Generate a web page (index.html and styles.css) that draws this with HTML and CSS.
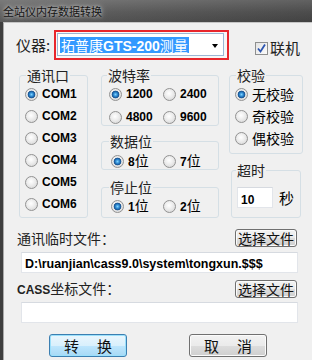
FILE: index.html
```html
<!DOCTYPE html>
<html lang="zh">
<head>
    <meta charset="UTF-8">
    <title>全站仪内存数据转换</title>
    <link rel="stylesheet" href="styles.css">
</head>
<body>
<div class="window">
    <div class="titlebar">全站仪内存数据转换</div>
    <div class="frame">
        <div class="client">
            <div class="toprow">
                <span class="lbl-dev">仪器:</span>
                <div class="mark">
                    <div class="combo">
                        <span class="sel">拓普康<b>GTS-200</b>测量</span>
                        <span class="arrow"></span>
                    </div>
                </div>
                <label class="chk">
                    <span class="box">
                        <svg width="11" height="11" viewBox="0 0 11 11"><path d="M2 5.5 L4.5 8.5 L9 1.5" fill="none" stroke="#2c55b0" stroke-width="1.8"/></svg>
                    </span>
                    <span>联机</span>
                </label>
            </div>

            <div class="groups">
                <fieldset class="grp g-port">
                    <legend>通讯口</legend>
                    <div class="opts">
                        <div class="opt"><span class="radio on"></span><b>COM1</b></div>
                        <div class="opt"><span class="radio"></span><b>COM2</b></div>
                        <div class="opt"><span class="radio"></span><b>COM3</b></div>
                        <div class="opt"><span class="radio"></span><b>COM4</b></div>
                        <div class="opt"><span class="radio"></span><b>COM5</b></div>
                        <div class="opt"><span class="radio"></span><b>COM6</b></div>
                    </div>
                </fieldset>

                <div class="col col-mid">
                    <fieldset class="grp g-baud">
                        <legend>波特率</legend>
                        <div class="grid">
                            <div class="opt"><span class="radio on"></span><b>1200</b></div>
                            <div class="opt"><span class="radio"></span><b>2400</b></div>
                            <div class="opt"><span class="radio"></span><b>4800</b></div>
                            <div class="opt"><span class="radio"></span><b>9600</b></div>
                        </div>
                    </fieldset>
                    <fieldset class="grp g-data">
                        <legend>数据位</legend>
                        <div class="grid">
                            <div class="opt"><span class="radio on"></span><span><b>8</b>位</span></div>
                            <div class="opt"><span class="radio"></span><span><b>7</b>位</span></div>
                        </div>
                    </fieldset>
                    <fieldset class="grp g-stop">
                        <legend>停止位</legend>
                        <div class="grid">
                            <div class="opt"><span class="radio on"></span><span><b>1</b>位</span></div>
                            <div class="opt"><span class="radio"></span><span><b>2</b>位</span></div>
                        </div>
                    </fieldset>
                </div>

                <div class="col col-right">
                    <fieldset class="grp g-check">
                        <legend>校验</legend>
                        <div class="opts">
                            <div class="opt"><span class="radio on"></span><span>无校验</span></div>
                            <div class="opt"><span class="radio"></span><span>奇校验</span></div>
                            <div class="opt"><span class="radio"></span><span>偶校验</span></div>
                        </div>
                    </fieldset>
                    <fieldset class="grp g-time">
                        <legend>超时</legend>
                        <div class="timeout">
                            <span class="field small"><b>10</b></span>
                            <span>秒</span>
                        </div>
                    </fieldset>
                </div>
            </div>

            <div class="files">
                <div class="filerow">
                    <span>通讯临时文件：</span>
                    <span class="btn pick">选择文件</span>
                </div>
                <div class="field path"><b>D:\ruanjian\cass9.0\system\tongxun.$$$</b></div>
                <div class="filerow second">
                    <span><b class="cass">CASS</b>坐标文件：</span>
                    <span class="btn pick">选择文件</span>
                </div>
                <div class="field path"></div>
            </div>

            <div class="actions">
                <span class="btn big default"><span>转</span><span>换</span></span>
                <span class="btn big"><span>取</span><span>消</span></span>
            </div>
        </div>
    </div>
</div>
</body>
</html>
```

FILE: styles.css
```css
body{
    margin: 0;
    background: #f0f0f0;
    font-family: "Noto Sans CJK SC", "Liberation Sans", sans-serif;
    font-size: 14px;
    color: #000;
}
b{
    font-family: "Liberation Sans", sans-serif;
    font-weight: bold;
}
.window{
    width: 312px;
    height: 360px;
    display: flex;
    flex-direction: column;
    overflow: hidden;
}
.titlebar{
    height: 22px;
    line-height: 22px;
    padding-left: 3px;
    font-size: 11px;
    color: #141414;
    background: linear-gradient(to right, rgba(255,255,255,0.08), rgba(0,0,0,0.12)), linear-gradient(#6f6f6f, #575757 55%, #4b4b4b);
    text-shadow: 0 0 6px rgba(255,255,255,0.7), 0 0 3px rgba(255,255,255,0.5);
}
.frame{
    flex: 1;
    display: flex;
    background: #3e3e3e;
    padding-left: 3px;
}
.client{
    flex: 1;
    background: #f0f0f0;
    border-top: 1px solid #c6c6c6;
    border-left: 1px solid #a9a9a9;
}

/* top row */
.toprow{
    display: flex;
    align-items: center;
    margin-top: 7px;
    padding-left: 12px;
    height: 30px;
}
.lbl-dev{
    width: 38px;
    font-size: 15px;
    line-height: 18px;
    color: #222;
}
.mark{
    width: 175px;
    height: 30px;
    box-sizing: border-box;
    border: 2px solid #e8262c;
    padding: 1px 3px 2px 1px;
    background: #f7f7f7;
}
.combo{
    height: 100%;
    box-sizing: border-box;
    border: 1px solid #9cb6d4;
    background: #fff;
    display: flex;
    align-items: center;
    padding-left: 2px;
}
.sel{
    background: #3399ff;
    color: #fff;
    line-height: 16px;
    height: 16px;
    padding: 0 1px;
    font-size: 14px;
}
.sel b{
    font-size: 14px;
}
.arrow{
    margin-left: auto;
    margin-right: 5px;
    margin-top: 2px;
    border-left: 3.5px solid transparent;
    border-right: 3.5px solid transparent;
    border-top: 4px solid #000;
}
.chk{
    display: flex;
    align-items: center;
    gap: 2px;
    margin-left: 26px;
    margin-top: 6px;
    font-size: 15px;
    line-height: 16px;
    color: #222;
}
.box{
    width: 13px;
    height: 13px;
    box-sizing: border-box;
    border: 1px solid #8e8f8f;
    background: linear-gradient(135deg, #e4e4e4, #fbfbfb);
    display: flex;
    align-items: center;
    justify-content: center;
}

/* group boxes */
.groups{
    display: flex;
    align-items: flex-start;
    margin-top: 7px;
    padding-left: 15px;
}
.grp{
    margin: 0;
    min-width: 0;
    box-sizing: border-box;
    border: 1px solid #d5dfe5;
    border-radius: 3px;
    padding: 3px 0 0 5px;
}
.grp legend{
    font-size: 14px;
    line-height: 16px;
    padding: 0 1px;
    margin-left: 1px;
    color: #222;
}
.col{
    display: flex;
    flex-direction: column;
}
.g-port{
    width: 69px;
    padding-bottom: 5px;
}
.col-mid{
    width: 118px;
    margin-left: 13px;
}
.col-right{
    width: 74px;
    margin-left: 10px;
}
.opts{
    display: flex;
    flex-direction: column;
    gap: 6px;
}
.opt{
    display: flex;
    align-items: center;
    gap: 4px;
    height: 16px;
    line-height: 16px;
    font-size: 14px;
    white-space: nowrap;
}
.opt b{
    font-size: 12px;
}
.radio{
    width: 13px;
    height: 13px;
    box-sizing: border-box;
    flex: none;
    border-radius: 50%;
    border: 1px solid #929292;
    background: radial-gradient(circle at 45% 40%, #ffffff 0, #ececec 45%, #cfcfcf 100%);
}
.radio.on{
    background: radial-gradient(circle at 50% 50%, #7fd4ff 0, #2c86cf 2px, #164f8c 3.5px, rgba(255,255,255,0) 4.2px), radial-gradient(circle at 45% 40%, #ffffff 0, #ececec 45%, #cfcfcf 100%);
}
.grid{
    display: grid;
    grid-template-columns: 54px 54px;
    row-gap: 7px;
}
.g-baud legend,
.g-data legend,
.g-stop legend{
    margin-left: -2px;
}
.g-baud{
    padding-left: 7px;
}
.g-data{
    margin-top: 7px;
    padding: 4px 0 0 9px;
}
.g-stop{
    margin-top: 9px;
    padding: 3px 0 3px 9px;
}
.g-data .grid,
.g-stop .grid{
    grid-template-columns: 52px 52px;
}
.g-check{
    padding-bottom: 7px;
}
.g-time{
    margin: 8px 2px 0;
    padding: 9px 0 9px 5px;
}
.g-time legend{
    margin-left: -1px;
}
.timeout{
    display: flex;
    align-items: center;
    gap: 6px;
    font-size: 15px;
}
.field{
    box-sizing: border-box;
    background: #fff;
    border: 1px solid #e2e5ea;
    border-top-color: #d6dae0;
}
.field.small{
    width: 36px;
    height: 21px;
    line-height: 19px;
    padding-left: 3px;
}
.field.small b{
    font-size: 12px;
}

/* file rows */
.files{
    margin-top: 11px;
    padding: 0 14px 0 13px;
}
.filerow{
    display: flex;
    justify-content: space-between;
    align-items: center;
    height: 18px;
    font-size: 14px;
    line-height: 18px;
    color: #222;
}
.filerow.second{
    margin-top: 7px;
}
.cass{
    font-size: 12px;
}
.field.path{
    margin: 5px 0 0 4px;
    height: 21px;
    line-height: 19px;
    padding-left: 3px;
    white-space: nowrap;
    overflow: hidden;
}
.field.path b{
    font-size: 12.5px;
}
.filerow.second + .field.path{
    margin-top: 4px;
}
.btn{
    box-sizing: border-box;
    border: 1px solid #707070;
    border-radius: 3px;
    background: linear-gradient(#f2f2f2 0, #ebebeb 50%, #dddddd 51%, #cfcfcf 100%);
    box-shadow: inset 0 0 0 1px #fbfbfb;
    color: #111;
}
.btn.pick{
    height: 18px;
    line-height: 16px;
    padding: 0 2px;
    margin-right: 1px;
    font-size: 14px;
}

/* bottom buttons */
.actions{
    display: flex;
    gap: 62px;
    margin-top: 11px;
    padding-left: 45px;
}
.btn.big{
    width: 78px;
    height: 23px;
    display: flex;
    justify-content: center;
    gap: 18px;
    font-size: 15px;
    line-height: 21px;
}
.btn.default{
    border-color: #3c7fb1;
    background: linear-gradient(#eaf6fd 0, #d9f0fc 50%, #bee6fd 51%, #a7d9f5 100%);
    box-shadow: inset 0 0 0 1px #9be0fb;
}
```
